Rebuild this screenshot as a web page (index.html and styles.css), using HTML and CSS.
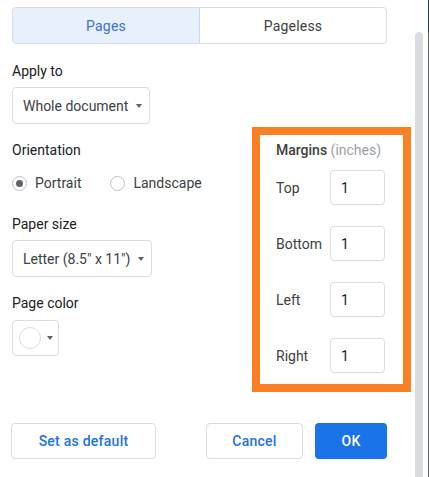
FILE: index.html
```html
<!DOCTYPE html>
<html>
<head>
<meta charset="utf-8">
<link rel="stylesheet" href="styles.css">
</head>
<body>
<div class="page">
  <div class="content">
    <div class="toggle">
      <div class="seg seg-on">Pages</div>
      <div class="seg">Pageless</div>
    </div>
    <div class="main">
      <div class="left">
        <div class="label l-apply">Apply to</div>
        <div class="select s-apply"><span>Whole document</span><i class="caret"></i></div>
        <div class="label l-orient">Orientation</div>
        <div class="radios">
          <div class="radio"><span class="dot on"></span>Portrait</div>
          <div class="radio"><span class="dot"></span>Landscape</div>
        </div>
        <div class="label l-paper">Paper size</div>
        <div class="select s-paper"><span>Letter (8.5" x 11")</span><i class="caret"></i></div>
        <div class="label l-color">Page color</div>
        <div class="colorbtn"><span class="swatch"></span><i class="caret"></i></div>
      </div>
      <div class="margins">
        <div class="m-title"><b>Margins</b> <span>(inches)</span></div>
        <div class="m-row"><span class="m-label">Top</span><div class="m-input">1</div></div>
        <div class="m-row"><span class="m-label">Bottom</span><div class="m-input">1</div></div>
        <div class="m-row"><span class="m-label">Left</span><div class="m-input">1</div></div>
        <div class="m-row"><span class="m-label">Right</span><div class="m-input">1</div></div>
      </div>
    </div>
    <div class="actions">
      <div class="btn b-default">Set as default</div>
      <div class="spacer"></div>
      <div class="btn b-cancel">Cancel</div>
      <div class="btn b-ok">OK</div>
    </div>
  </div>
  <div class="scroll"><div class="thumb"></div></div>
  <div class="edge"></div>
</div>
</body>
</html>
```

FILE: styles.css
```css
* { box-sizing: border-box; }
html, body { margin: 0; padding: 0; background: #fff; }
body { font-family: Roboto, "Liberation Sans", Arial, sans-serif; color: #3c4043; font-size: 14px; }
.page { position: relative; width: 429px; height: 477px; overflow: hidden; background: #fff; }
.content { padding: 7px 0 0 12px; }

.toggle { display: flex; width: 375px; height: 37px; border: 1px solid #dadce0; border-radius: 4px; overflow: hidden; }
.seg { flex: 1 1 0; display: flex; align-items: center; justify-content: center; font-size: 14px; color: #3c4043; letter-spacing: 0.2px; }
.seg-on { flex: 0 0 188px; background: #e8f0fe; color: #3c6fd7; margin: -1px 0 -1px -1px; border: 1px solid #c6d6f7; border-radius: 4px 0 0 4px; }

.main { display: flex; }
.left { flex: none; display: flex; flex-direction: column; align-items: flex-start; width: 240px; }
.label { line-height: 20px; font-size: 14px; color: #202124; }
.l-apply { margin-top: 17px; }
.l-orient { margin-top: 16px; }
.l-paper { margin-top: 21px; }
.l-color { margin-top: 16px; }

.select { margin-top: 6px; height: 37px; border: 1px solid #dadce0; border-radius: 4px; display: flex; align-items: center; padding-left: 10px; font-size: 14px; color: #3c4043; }
.s-apply { width: 138px; }
.s-paper { width: 140px; }
.caret { display: block; flex: none; width: 0; height: 0; border-left: 3.5px solid transparent; border-right: 3.5px solid transparent; border-top: 4px solid #5f6368; margin-left: 8px; }

.radios { display: flex; margin-top: 13px; height: 20px; align-items: center; }
.radio { display: flex; align-items: center; color: #3c4043; margin-right: 29px; }
.dot { width: 15px; height: 15px; border: 1px solid #bdc1c6; border-radius: 50%; margin-right: 8px; display: flex; align-items: center; justify-content: center; }
.dot.on::after { content: ""; width: 7px; height: 7px; border-radius: 50%; background: #5f6368; }

.colorbtn { margin-top: 7px; width: 47px; height: 36px; border: 1px solid #dadce0; border-radius: 4px; display: flex; align-items: center; padding-left: 6px; }
.swatch { width: 22px; height: 22px; border: 1px solid #dadce0; border-radius: 50%; background: #fff; }
.colorbtn .caret { margin-left: 6px; }

.margins { flex: none; margin-top: 83px; width: 159px; height: 265px; border: 8px solid #fb8025; padding: 5px 0 0 16px; }
.m-title { line-height: 20px; font-size: 14px; color: #3c4043; }
.m-title b { font-weight: 500; }
.m-title span { color: #9aa0a6; }
.m-row { display: flex; align-items: center; height: 35px; margin-top: 10px; }
.m-row + .m-row { margin-top: 21px; }
.m-label { width: 54px; color: #3c4043; }
.m-input { width: 55px; height: 35px; border: 1px solid #dadce0; border-radius: 4px; display: flex; align-items: center; padding-left: 10px; color: #202124; }

.actions { display: flex; margin-top: 31px; margin-left: -1px; height: 36px; }
.btn { height: 36px; border-radius: 4px; display: flex; align-items: center; justify-content: center; font-weight: 500; font-size: 14px; letter-spacing: 0.25px; }
.b-default { width: 145px; border: 1px solid #dadce0; color: #1a73e8; }
.spacer { flex: 0 0 50px; }
.b-cancel { width: 97px; border: 1px solid #dadce0; color: #1a73e8; margin-right: 12px; }
.b-ok { width: 72px; background: #1a73e8; color: #fff; }

.scroll { position: absolute; left: 415px; top: 32px; width: 8px; bottom: 0; }
.thumb { width: 8px; height: 100%; background: #dadce0; border-radius: 4px 4px 0 0; }
.edge { position: absolute; right: 0; top: 0; bottom: 0; width: 1px; background: #5f6368; border-top: 33px solid #1f3a5f; }
```
